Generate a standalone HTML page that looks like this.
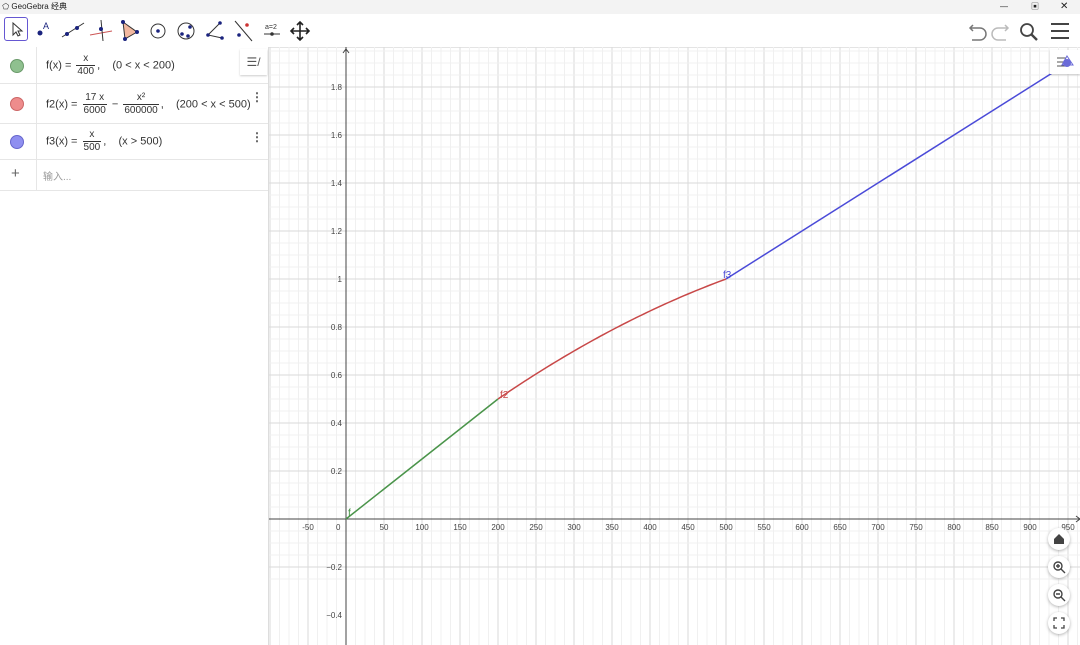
<!DOCTYPE html>
<html><head><meta charset="utf-8"><style>
body{margin:0;width:1080px;height:645px;overflow:hidden;background:#fff;font-family:"Liberation Sans","Noto Sans CJK SC",sans-serif;position:relative}
.title{position:absolute;left:0;top:0;width:1080px;height:14px;background:#f3f3f3;font-size:8px;color:#222;line-height:14px}
.tb{position:absolute;left:0;top:14px;width:1080px;height:33px;background:#fff;border-bottom:1px solid #e4e4e4}
.tool{position:absolute;top:3px;width:24px;height:24px;border-radius:3px}
.alg{position:absolute;left:0;top:47px;width:268px;height:598px;border-right:1px solid #ddd;background:#fff}
.row{position:absolute;left:0;width:268px;border-bottom:1px solid #e6e6e6;font-size:11px;color:#333}
.dot{position:absolute;left:10px;width:13px;height:13px;border-radius:50%}
.sep{position:absolute;left:36px;top:0;bottom:0;border-left:1px solid #e6e6e6}
.fr{display:inline-block;vertical-align:middle;text-align:center;font-size:10px;line-height:12px;margin:0 2px}
.fr span{display:block;padding:0 1px}
.fr span:first-child{border-bottom:1px solid #333}
.eq{position:absolute;left:46px;white-space:nowrap}
.kb{position:absolute;left:251px;font-size:12px;color:#555;font-weight:bold}
.btn{position:absolute;left:1048px;width:22px;height:22px;border-radius:50%;background:#fff;box-shadow:0 1px 3px rgba(0,0,0,.3)}
</style></head><body>
<div class="title">&nbsp;⬠ GeoGebra 经典<span style="position:absolute;left:1000px;top:0">—</span><span style="position:absolute;left:1031px">▣</span><span style="position:absolute;left:1060px;font-size:10px">✕</span></div>
<div class="tb">
<div class="tool" style="left:4px;border:1.5px solid #6557d2;width:22px;height:22px"><svg width="22" height="22"><path d="M8 5 L8 17 L11 14 L13 18 L15 17 L13 13 L17 13 Z" fill="none" stroke="#333"/></svg></div>
<svg style="position:absolute;left:32px;top:3px" width="280" height="26">
<circle cx="8" cy="16" r="2.5" fill="#1a237e"/><text x="11" y="12" font-size="9" fill="#1a237e">A</text>
<line x1="30" y1="20" x2="52" y2="6" stroke="#333"/><circle cx="35" cy="17" r="2" fill="#1a237e"/><circle cx="45" cy="11" r="2" fill="#1a237e"/>
<line x1="58" y1="18" x2="80" y2="14" stroke="#c55"/><line x1="69" y1="3" x2="71" y2="24" stroke="#333"/><circle cx="69" cy="12" r="2" fill="#1a237e"/>
<path d="M91 5 L105 15 L93 22 Z" fill="#f2b8a0" stroke="#333"/><circle cx="91" cy="5" r="2" fill="#1a237e"/><circle cx="105" cy="15" r="2" fill="#1a237e"/><circle cx="93" cy="22" r="2" fill="#1a237e"/>
<circle cx="126" cy="14" r="7" fill="none" stroke="#333"/><circle cx="126" cy="14" r="1.8" fill="#1a237e"/>
<circle cx="154" cy="14" r="8" fill="none" stroke="#333"/><circle cx="150" cy="17" r="1.8" fill="#1a237e"/><circle cx="158" cy="10" r="1.8" fill="#1a237e"/><circle cx="156" cy="19" r="1.8" fill="#1a237e"/>
<path d="M188 6 L176 18 L190 21" fill="none" stroke="#333"/><circle cx="188" cy="6" r="1.8" fill="#1a237e"/><circle cx="176" cy="18" r="1.8" fill="#1a237e"/><circle cx="190" cy="21" r="1.8" fill="#1a237e"/>
<line x1="203" y1="4" x2="220" y2="24" stroke="#333"/><circle cx="215" cy="8" r="1.8" fill="#c33"/><circle cx="207" cy="18" r="1.8" fill="#1a237e"/>
<text x="233" y="12" font-size="7" fill="#333">a=2</text><line x1="232" y1="17" x2="248" y2="17" stroke="#333"/><circle cx="240" cy="17" r="1.8" fill="#333"/>
<path d="M268 5 V23 M259 14 H277 M265 8 L268 5 L271 8 M265 20 L268 23 L271 20 M262 11 L259 14 L262 17 M274 11 L277 14 L274 17" fill="none" stroke="#222" stroke-width="1.6"/>
</svg>
<svg style="position:absolute;left:966px;top:6px" width="110" height="24">
<path d="M4 8 H14 A6 6 0 0 1 14 20 H6 M7 5 L4 8 L7 11" fill="none" stroke="#777" stroke-width="1.5"/>
<path d="M42 8 H32 A6 6 0 0 0 32 20 H40 M39 5 L42 8 L39 11" fill="none" stroke="#bbb" stroke-width="1.5"/>
<circle cx="61" cy="10" r="6" fill="none" stroke="#444" stroke-width="1.8"/><line x1="65" y1="14" x2="71" y2="20" stroke="#444" stroke-width="2.4"/>
<path d="M85 4 H103 M85 11 H103 M85 18 H103" stroke="#444" stroke-width="2"/>
</svg>
</div>
<div class="alg">
<div class="row" style="top:0;height:36px"><div class="dot" style="top:12px;background:#8fc08f;border:1px solid #6a9a6a;width:12px;height:12px"></div><div class="sep"></div>
<div class="eq" style="top:6px">f(x) = <span class="fr"><span>x</span><span>400</span></span>,&nbsp;&nbsp;&nbsp; (0 &lt; x &lt; 200)</div>
<div style="position:absolute;left:240px;top:2px;width:27px;height:26px;background:#fff;box-shadow:0 1px 2px rgba(0,0,0,.2);font-size:12px;color:#555;text-align:center;line-height:26px">☰/</div></div>
<div class="row" style="top:37px;height:39px"><div class="dot" style="top:13px;background:#ee8c8c;border:1px solid #c66;width:12px;height:12px"></div><div class="sep"></div>
<div class="eq" style="top:8px">f2(x) = <span class="fr"><span>17 x</span><span>6000</span></span> − <span class="fr"><span>x²</span><span>600000</span></span>,&nbsp;&nbsp;&nbsp; (200 &lt; x &lt; 500)</div><div class="kb" style="top:6px">⋮</div></div>
<div class="row" style="top:77px;height:35px"><div class="dot" style="top:11px;background:#8f8ff0;border:1px solid #66c;width:12px;height:12px"></div><div class="sep"></div>
<div class="eq" style="top:5px">f3(x) = <span class="fr"><span>x</span><span>500</span></span>,&nbsp;&nbsp;&nbsp; (x &gt; 500)</div><div class="kb" style="top:6px">⋮</div></div>
<div class="row" style="top:113px;height:30px"><div class="sep"></div><div style="position:absolute;left:11px;top:5px;font-size:15px;color:#666">+</div><div style="position:absolute;left:43px;top:8px;color:#999;font-size:10px">输入...</div></div>
</div>
<svg id="g" style="position:absolute;left:269px;top:47px" width="811" height="598"></svg>
<div style="position:absolute;left:1050px;top:50px;width:30px;height:24px;background:#fff;box-shadow:0 1px 2px rgba(0,0,0,.2)"><svg width="30" height="24"><path d="M7 8 H16 M7 12 H14 M7 16 H16" stroke="#555"/><circle cx="17" cy="13" r="4" fill="#6b6bd8"/><path d="M17 6 L23 15 H12 Z" fill="none" stroke="#6b6bd8"/></svg></div>
<div class="btn" style="top:528px"><svg width="22" height="22"><path d="M6 11 L11 6 L16 11 V16 H6 Z" fill="#444"/></svg></div>
<div class="btn" style="top:556px"><svg width="22" height="22"><circle cx="10" cy="10" r="4" fill="none" stroke="#444" stroke-width="1.4"/><path d="M13 13 L17 17 M8 10 H12 M10 8 V12" stroke="#444" stroke-width="1.4"/></svg></div>
<div class="btn" style="top:584px"><svg width="22" height="22"><circle cx="10" cy="10" r="4" fill="none" stroke="#444" stroke-width="1.4"/><path d="M13 13 L17 17 M8 10 H12" stroke="#444" stroke-width="1.4"/></svg></div>
<div class="btn" style="top:612px"><svg width="22" height="22"><path d="M6 9 V6 H9 M13 6 H16 V9 M16 13 V16 H13 M9 16 H6 V13" fill="none" stroke="#444" stroke-width="1.3"/></svg></div>
<script>
var g=document.getElementById('g'),s='';
var ox=346-269,oy=519-47,sx=0.76,sy=240;
function X(v){return ox+v*sx}function Y(v){return oy-v*sy}
for(var k=-8;k<=80;k++){var x=X(k*12.5);s+='<line x1="'+x+'" y1="0" x2="'+x+'" y2="598" stroke="'+(k%4==0?'#dadada':'#f0f0f0')+'" stroke-width="1"/>';}
for(var k=-5;k<=40;k++){var y=Y(k*0.05);s+='<line x1="0" y1="'+y+'" x2="811" y2="'+y+'" stroke="'+(k%4==0?'#dadada':'#f0f0f0')+'"/>';}
s+='<line x1="'+ox+'" y1="0" x2="'+ox+'" y2="598" stroke="#444"/><line x1="0" y1="'+oy+'" x2="811" y2="'+oy+'" stroke="#444"/>';
s+='<path d="M'+(ox-3)+' 6 L'+ox+' 2 L'+(ox+3)+' 6 M807 '+(oy-3)+' L811 '+oy+' L807 '+(oy+3)+'" fill="none" stroke="#444"/>';
for(var v=-50;v<=950;v+=50){if(!v)continue;s+='<text x="'+X(v)+'" y="'+(oy+11)+'" font-size="8" fill="#444" text-anchor="middle">'+v+'</text>';}
s+='<text x="'+(ox-10)+'" y="'+(oy+11)+'" font-size="8" fill="#444">0</text>';
[1.8,1.6,1.4,1.2,1,0.8,0.6,0.4,0.2,-0.2,-0.4].forEach(function(v){s+='<text x="'+(ox-4)+'" y="'+(Y(v)+3)+'" font-size="8" fill="#444" text-anchor="end">'+(v<0?'−'+(-v):v)+'</text>';});
s+='<path d="M'+X(0)+' '+Y(0)+' L'+X(200)+' '+Y(0.5)+'" stroke="#4a944a" stroke-width="1.5" fill="none"/>';
var p='M'+X(200)+' '+Y(0.5);for(var x=205;x<=500;x+=5){p+=' L'+X(x)+' '+Y(17*x/6000-x*x/600000);}
s+='<path d="'+p+'" stroke="#c84848" stroke-width="1.5" fill="none"/>';
s+='<path d="M'+X(500)+' '+Y(1)+' L'+X(942)+' '+Y(1.884)+'" stroke="#4a4ad8" stroke-width="1.5" fill="none"/>';
s+='<text x="'+(ox+2)+'" y="'+(oy-3)+'" font-size="10" fill="#3f8f3f">f</text>';
s+='<text x="'+(X(200)+2)+'" y="'+(Y(0.5)-1)+'" font-size="10" fill="#c84848">f2</text>';
s+='<text x="'+(X(500)-3)+'" y="'+(Y(1)-1)+'" font-size="10" fill="#4a4ad8">f3</text>';
g.innerHTML=s;
</script>
</body></html>
